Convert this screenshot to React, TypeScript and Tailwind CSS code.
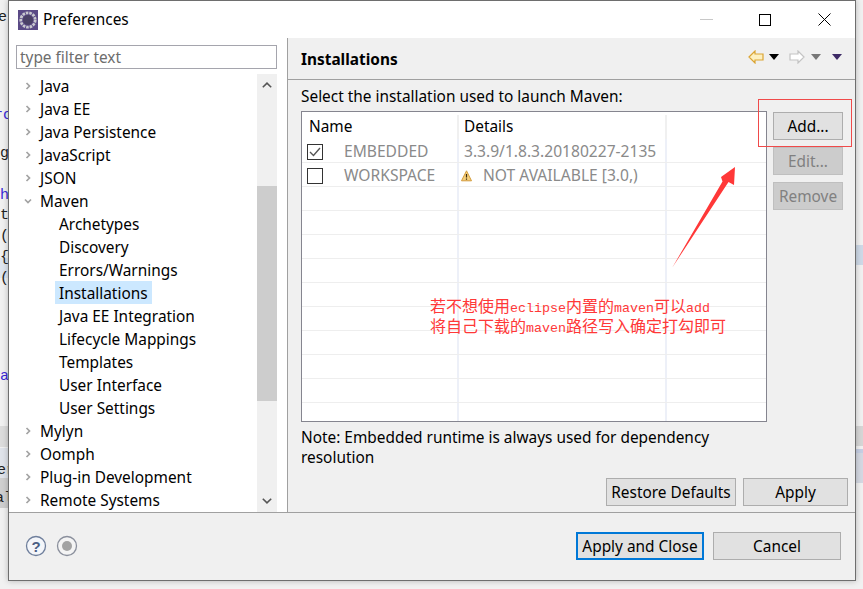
import { clsx } from "clsx";

const uiFont = "font-['Noto_Sans','Noto_Sans_CJK_SC',sans-serif]";

const tree = [
  { label: "Java", kind: "closed" },
  { label: "Java EE", kind: "closed" },
  { label: "Java Persistence", kind: "closed" },
  { label: "JavaScript", kind: "closed" },
  { label: "JSON", kind: "closed" },
  { label: "Maven", kind: "open" },
  { label: "Archetypes", kind: "child" },
  { label: "Discovery", kind: "child" },
  { label: "Errors/Warnings", kind: "child" },
  { label: "Installations", kind: "selected" },
  { label: "Java EE Integration", kind: "child" },
  { label: "Lifecycle Mappings", kind: "child" },
  { label: "Templates", kind: "child" },
  { label: "User Interface", kind: "child" },
  { label: "User Settings", kind: "child" },
  { label: "Mylyn", kind: "closed" },
  { label: "Oomph", kind: "closed" },
  { label: "Plug-in Development", kind: "closed" },
  { label: "Remote Systems", kind: "closed" },
];

function Chevron({ open }: { open?: boolean }) {
  return (
    <svg width="8" height="8" viewBox="0 0 8 8" fill="none" className="shrink-0">
      <path
        d={open ? "M1 2.5 L4 5.5 L7 2.5" : "M2.5 1 L5.5 4 L2.5 7"}
        stroke="#a3a3a3"
        strokeWidth="1.7"
      />
    </svg>
  );
}

function TreeRow({ label, kind }: { label: string; kind: string }) {
  if (kind === "child" || kind === "selected") {
    return (
      <div className="flex h-[23px] items-center pl-[39px]">
        <span className={clsx("h-[23px] px-[4px] leading-[25px]", kind === "selected" && "bg-[#cce8ff]")}>
          {label}
        </span>
      </div>
    );
  }
  return (
    <div className="flex h-[23px] items-center pl-[8px]">
      <Chevron open={kind === "open"} />
      <span className="ml-[8px] h-[23px] leading-[25px]">{label}</span>
    </div>
  );
}

function Btn({
  label,
  className,
  disabled,
  focused,
}: {
  label: string;
  className: string;
  disabled?: boolean;
  focused?: boolean;
}) {
  return (
    <button
      className={clsx(
        "flex h-[28px] items-center justify-center pt-[2px] text-[15.4px]",
        disabled
          ? "border border-[#bfbfbf] bg-[#cccccc] text-[#808080]"
          : "bg-[#e1e1e1] text-black",
        !disabled && (focused ? "border-2 border-[#0078d7]" : "border border-[#adadad]"),
        className,
      )}
    >
      {label}
    </button>
  );
}

function Arrow({ color, stroke }: { color: string; stroke: string }) {
  return (
    <svg width="16" height="14" viewBox="0 0 16 14">
      <path
        d="M1 7 L7 1 L7 4 L15 4 L15 10 L7 10 L7 13 Z"
        fill={color}
        stroke={stroke}
        strokeWidth="1.2"
      />
    </svg>
  );
}

function ArrowRight({ color, stroke }: { color: string; stroke: string }) {
  return (
    <svg width="16" height="14" viewBox="0 0 16 14">
      <path
        d="M15 7 L9 1 L9 4 L1 4 L1 10 L9 10 L9 13 Z"
        fill={color}
        stroke={stroke}
        strokeWidth="1.2"
      />
    </svg>
  );
}

function Caret({ color }: { color: string }) {
  return (
    <svg width="10" height="6" viewBox="0 0 10 6">
      <path d="M0 0 L10 0 L5 6 Z" fill={color} />
    </svg>
  );
}

function Toolbar() {
  return (
    <div className="mb-[4px] flex items-center">
      <Arrow color="#fdf0c0" stroke="#dba534" />
      <span className="ml-[5px] flex"><Caret color="#000000" /></span>
      <span className="ml-[10px] flex"><ArrowRight color="#ffffff" stroke="#c4c4c4" /></span>
      <span className="ml-[6px] flex"><Caret color="#777777" /></span>
      <span className="ml-[11px] flex"><Caret color="#3d2a66" /></span>
    </div>
  );
}

function Check({ on }: { on?: boolean }) {
  return (
    <span className="flex h-[16px] w-[16px] items-center justify-center border border-[#333333] bg-white">
      {on && (
        <svg width="12" height="10" viewBox="0 0 12 10" fill="none">
          <path d="M1 5 L4.5 8.5 L11 1" stroke="#555555" strokeWidth="1.4" />
        </svg>
      )}
    </span>
  );
}

function WarnIcon() {
  return (
    <svg width="11" height="12" viewBox="0 0 11 12">
      <path d="M5.5 0.8 L10.5 10.8 L0.5 10.8 Z" fill="#f5cf7a" stroke="#d29b3c" strokeLinejoin="round" />
      <path d="M5.5 4 L5.5 7.5 M5.5 8.6 L5.5 9.8" stroke="#3a2a10" strokeWidth="1.2" />
    </svg>
  );
}

function TableRow({ children, second }: { children?: React.ReactNode; second?: React.ReactNode }) {
  return (
    <div className="flex h-[24px] shrink-0 border-b border-[#eeeeee] text-[15.6px]">
      <div className="flex w-[157px] shrink-0 items-center border-r-2 border-[#edf0f8] pl-[5px] pt-[2px]">{children}</div>
      <div className="flex w-[208px] shrink-0 items-center border-r-2 border-[#edf0f8] pt-[2px]">{second}</div>
      <div className="flex-1" />
    </div>
  );
}

function InstallTable() {
  const blanks = Array.from({ length: 10 }, (_, i) => i);
  return (
    <div className="flex h-[311px] w-[466px] flex-col overflow-hidden border border-[#85858f] bg-white">
      <div className="flex h-[27px] shrink-0 pt-[3px]">
        <div className="flex w-[157px] items-center border-r-2 border-[#f0f0f0] pl-[7px]">Name</div>
        <div className="flex w-[208px] items-center border-r-2 border-[#f0f0f0] pl-[5px]">Details</div>
      </div>
      <TableRow
        second={<span className="pl-[5px] text-[#8a8a8a]">3.3.9/1.8.3.20180227-2135</span>}
      >
        <Check on />
        <span className="ml-[21px] text-[#8a8a8a]">EMBEDDED</span>
      </TableRow>
      <TableRow
        second={
          <span className="flex items-center pl-[2px] text-[#8a8a8a]">
            <WarnIcon />
            <span className="ml-[11px]">NOT AVAILABLE [3.0,)</span>
          </span>
        }
      >
        <Check />
        <span className="ml-[21px] text-[#8a8a8a]">WORKSPACE</span>
      </TableRow>
      {blanks.map((i) => (
        <TableRow key={i} />
      ))}
    </div>
  );
}

function Note() {
  const line = "h-[20px] text-[16px] leading-[20px]";
  const mono = "font-['Liberation_Mono',monospace] text-[13.33px] leading-[20px]";
  return (
    <div className="absolute left-[430px] top-[295px] font-['Noto_Sans_CJK_SC',sans-serif] whitespace-nowrap text-[#ff3838]">
      <div className={line}>
        若不想使用<span className={mono}>eclipse</span>内置的<span className={mono}>maven</span>可以<span className={mono}>add</span>
      </div>
      <div className={line}>
        将自己下载的<span className={mono}>maven</span>路径写入确定打勾即可
      </div>
    </div>
  );
}

function Backdrop() {
  const blue = "font-['Liberation_Mono',monospace] text-[15px] text-[#3b2ad6]";
  const dark = "font-['Liberation_Mono',monospace] text-[15px] text-[#222222]";
  return (
    <>
      <div className="absolute left-0 top-[258px] h-[20px] w-[8px] bg-[#dfe6f0]" />
      <div className="absolute left-0 top-[426px] h-[21px] w-[8px] bg-[#dcdcdc]" />
      <div className="absolute left-0 top-[448px] h-[30px] w-[8px] bg-[#dfe3ea]" />
      <div className="absolute left-0 top-[478px] h-[30px] w-[8px] bg-[#cfcfcf]" />
      <span className={clsx("absolute left-[-2px] top-[7px]", dark)}>e</span>
      <span className={clsx("absolute left-[-6px] top-[105px]", blue)}>rc</span>
      <span className={clsx("absolute left-0 top-[143px]", dark)}>g</span>
      <span className={clsx("absolute left-0 top-[185px]", blue)}>h</span>
      <span className={clsx("absolute left-0 top-[205px]", dark)}>t</span>
      <span className={clsx("absolute left-0 top-[226px]", dark)}>(</span>
      <span className={clsx("absolute left-0 top-[247px]", dark)}>{"{"}</span>
      <span className={clsx("absolute left-0 top-[268px]", dark)}>(</span>
      <span className={clsx("absolute left-0 top-[366px]", blue)}>a</span>
      <span className={clsx("absolute left-[-3px] top-[460px]", dark)}>er</span>
      <span className={clsx("absolute left-[-5px] top-[488px]", dark)}>al</span>
      <div className="absolute left-[856px] top-[245px] h-[20px] w-[7px] bg-[#ced9e7]" />
      <div className="absolute left-[856px] top-[426px] h-[20px] w-[7px] bg-[#d6d6d6]" />
      <div className="absolute left-[856px] top-[449px] h-[4px] w-[7px] bg-[#c6cfe4]" />
      <div className="absolute left-[856px] top-[453px] h-[30px] w-[7px] bg-[#d4d8e2]" />
    </>
  );
}

export default function App() {
  return (
    <div className={clsx("relative h-[589px] w-[863px] overflow-hidden bg-[#f1f1f1] text-[15.4px] text-black", uiFont)}>
      <Backdrop />
      <div className="relative ml-[8px] flex h-[581px] w-[848px] flex-col border border-[#6e6e6e] bg-[#f0f0f0] shadow-[0_0_6px_rgba(0,0,0,0.25)]">
        {/* title bar */}
        <div className="flex h-[37px] shrink-0 items-center bg-white">
          <svg width="20" height="20" viewBox="0 0 20 20" className="ml-[9px]">
            <rect width="20" height="20" fill="#5a4a86" />
            <circle cx="10" cy="10" r="7.2" fill="none" stroke="#c9c9cf" strokeWidth="2.8" strokeDasharray="2.6 0.9" />
            <circle cx="10" cy="10" r="5" fill="#4a4166" />
          </svg>
          <span className="ml-[5px] pt-[1px]">Preferences</span>
          <div className="ml-auto flex items-center">
            <div className="h-px w-[13px] bg-[#c8c8c8]" />
            <div className="ml-[46px] h-[12px] w-[12px] border border-black" />
            <svg width="13" height="13" viewBox="0 0 13 13" className="ml-[47px] mr-[24px]">
              <path d="M0.5 0.5 L12.5 12.5 M12.5 0.5 L0.5 12.5" stroke="#000000" strokeWidth="1" />
            </svg>
          </div>
        </div>

        {/* body */}
        <div className="flex h-[475px] shrink-0 border-b border-[#a0a0a0]">
          <div className="flex w-[279px] shrink-0 flex-col border-r border-[#a0a0a0] bg-white pl-[7px]">
            <div className="mt-[7px] flex h-[24px] w-[261px] shrink-0 items-center border border-[#a5a5ad] pl-[3px] pt-[2px] text-[#6d6d6d]">
              type filter text
            </div>
            <div className="mt-[5px] flex min-h-0 w-[261px] flex-1">
              <div className="w-[241px] overflow-hidden">
                {tree.map((row) => (
                  <TreeRow key={row.label} label={row.label} kind={row.kind} />
                ))}
              </div>
              <div className="flex w-[20px] flex-col items-center bg-[#f0f0f0]">
                <svg width="10" height="6" viewBox="0 0 10 6" fill="none" className="mt-[8px]">
                  <path d="M0.8 5.3 L5 1.2 L9.2 5.3" stroke="#555555" strokeWidth="1.6" />
                </svg>
                <div className="mt-[98px] h-[215px] w-full bg-[#cdcdcd]" />
                <svg width="10" height="6" viewBox="0 0 10 6" fill="none" className="mt-[97px]">
                  <path d="M0.8 0.7 L5 4.8 L9.2 0.7" stroke="#555555" strokeWidth="1.6" />
                </svg>
              </div>
            </div>
          </div>

          <div className="flex min-w-0 flex-1 flex-col">
            <div className="flex h-[42px] shrink-0 items-center justify-between border-b border-[#a0a0a0] pl-[13px] pr-[13px]">
              <span className="pt-[3px] font-bold">Installations</span>
              <Toolbar />
            </div>
            <div className="flex min-h-0 flex-1 flex-col pl-[13px] pr-[7px]">
              <div className="mt-[6px] h-[21px] leading-[21px]">Select the installation used to launch Maven:</div>
              <div className="mt-[4px] flex">
                <InstallTable />
                <div className="ml-[6px] mt-px flex flex-col gap-[7px]">
                  <Btn label="Add..." className="w-[70px]" />
                  <Btn label="Edit..." className="w-[70px]" disabled />
                  <Btn label="Remove" className="w-[70px]" disabled />
                </div>
              </div>
              <p className="mt-[6px] w-[440px] leading-[20px]">
                Note: Embedded runtime is always used for dependency resolution
              </p>
              <div className="mt-auto mb-[6px] flex justify-end gap-[7px]">
                <Btn label="Restore Defaults" className="w-[130px]" />
                <Btn label="Apply" className="w-[105px]" />
              </div>
            </div>
          </div>
        </div>

        {/* footer */}
        <div className="flex flex-1 items-start pt-[19px]">
          <svg width="22" height="22" viewBox="0 0 22 22" className="ml-[16px] mt-[3px]">
            <circle cx="11" cy="11" r="9.5" fill="#f4f6fa" stroke="#6f7f9c" strokeWidth="1.3" />
            <text x="11" y="16.5" textAnchor="middle" fontSize="15" fontWeight="700" fill="#4c5f85" fontFamily="Liberation Sans">?</text>
          </svg>
          <svg width="22" height="22" viewBox="0 0 22 22" className="ml-[9px] mt-[3px]">
            <circle cx="11" cy="11" r="9.5" fill="#f4f4f4" stroke="#8a8f9c" strokeWidth="1.3" />
            <circle cx="11" cy="11" r="5" fill="#a3a3a3" />
          </svg>
          <div className="ml-auto mr-[14px] flex gap-[9px]">
            <Btn label="Apply and Close" className="w-[128px]" focused />
            <Btn label="Cancel" className="w-[128px]" />
          </div>
        </div>
      </div>

      {/* screenshot annotations drawn on top */}
      <div className="absolute left-[758px] top-[99px] h-[48px] w-[94px] border border-[#f04a4a]" />
      <svg width="70" height="106" viewBox="670 165 70 106" className="absolute left-[670px] top-[165px]">
        <path d="M672 268 L722.5 181.5 L721 177 L735 167 L734 185 L728.5 182 Z" fill="#ff3838" />
      </svg>
      <Note />
    </div>
  );
}
